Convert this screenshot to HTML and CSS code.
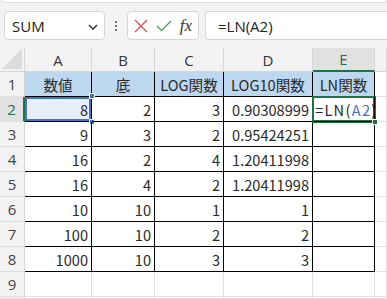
FILE: index.html
```
<!DOCTYPE html>
<html lang="ja">
<head>
<meta charset="utf-8">
<link rel="stylesheet" href="styles.css">
</head>
<body>
<div class="app">
  <div class="ribbon-edge"></div>
  <div class="toolbar">
    <div class="namebox"><span class="name">SUM</span>
      <svg class="chev" width="10" height="6" viewBox="0 0 10 6"><path d="M1 1 L5 5 L9 1" fill="none" stroke="#333" stroke-width="1.5"/></svg>
    </div>
    <div class="vdots"><i></i><i></i><i></i></div>
    <div class="fnbox">
      <svg width="14" height="14" viewBox="0 0 14 14"><path d="M1 1 L13 13 M13 1 L1 13" stroke="#d9534f" stroke-width="1.3" fill="none"/></svg>
      <svg width="16" height="12" viewBox="0 0 16 12"><path d="M1 6 L5.5 10.5 L15 1" stroke="#4ea35a" stroke-width="1.3" fill="none"/></svg>
      <span class="fx">fx</span>
    </div>
    <div class="formula">=LN(A2)</div>
  </div>
  <div class="sheet">
    <div class="corner"><svg width="20" height="21" viewBox="0 0 20 21"><polygon points="20,0 20,21 0,21" fill="#dcdcdc"/></svg></div>
    <div class="ch">A</div><div class="ch">B</div><div class="ch">C</div><div class="ch">D</div><div class="ch sel">E</div><div class="ch"></div>

    <div class="rh">1</div>
    <div class="c t hd">数値</div><div class="c t hd">底</div><div class="c t hd">LOG関数</div><div class="c t hd">LOG10関数</div><div class="c t hd">LN関数</div><div class="c"></div>

    <div class="rh sel">2</div>
    <div class="c t n ref">8<span class="hdl tr"></span><span class="hdl br"></span></div><div class="c t n">2</div><div class="c t n">3</div><div class="c t n">0.90308999</div><div class="c t active">=LN(<span class="refc">A2</span>)<span class="fill"></span></div><div class="c"></div>

    <div class="rh">3</div>
    <div class="c t n">9</div><div class="c t n">3</div><div class="c t n">2</div><div class="c t n">0.95424251</div><div class="c t"></div><div class="c"></div>

    <div class="rh">4</div>
    <div class="c t n">16</div><div class="c t n">2</div><div class="c t n">4</div><div class="c t n">1.20411998</div><div class="c t"></div><div class="c"></div>

    <div class="rh">5</div>
    <div class="c t n">16</div><div class="c t n">4</div><div class="c t n">2</div><div class="c t n">1.20411998</div><div class="c t"></div><div class="c"></div>

    <div class="rh">6</div>
    <div class="c t n">10</div><div class="c t n">10</div><div class="c t n">1</div><div class="c t n">1</div><div class="c t"></div><div class="c"></div>

    <div class="rh">7</div>
    <div class="c t n">100</div><div class="c t n">10</div><div class="c t n">2</div><div class="c t n">2</div><div class="c t"></div><div class="c"></div>

    <div class="rh">8</div>
    <div class="c t n">1000</div><div class="c t n">10</div><div class="c t n">3</div><div class="c t n">3</div><div class="c t"></div><div class="c"></div>

    <div class="rh">9</div>
    <div class="c"></div><div class="c"></div><div class="c"></div><div class="c"></div><div class="c"></div><div class="c"></div>

    <div class="rh"></div>
    <div class="c"></div><div class="c"></div><div class="c"></div><div class="c"></div><div class="c"></div><div class="c"></div>
  </div>
</div>
</body>
</html>
```
FILE: styles.css
```
* { box-sizing: border-box; }
html, body { margin: 0; padding: 0; }
body {
  width: 387px; height: 299px; overflow: hidden;
  background: #fff;
  font-family: "Noto Sans CJK JP", "Noto Sans", sans-serif;
  color: #222;
}
.app { width: 387px; height: 299px; display: flex; flex-direction: column; background: #f3f3f3; }
.ribbon-edge {
  height: 3px; margin-left: 1px; background: #fff;
  border: 1px solid #dedede; border-top: none;
  border-bottom-left-radius: 4px;
}
.toolbar {
  height: 45px; display: flex; align-items: flex-start;
  padding: 8px 0 0 4px;
}
.namebox {
  width: 101px; height: 29px; background: #fff;
  border: 1px solid #d6d6d6; border-radius: 4px;
  display: flex; align-items: center; justify-content: space-between;
  padding: 0 6px 0 7px;
  font-family: "Open Sans", "Noto Sans", sans-serif; font-size: 15px; color: #222;
}
.chev { margin-top: 2px; }
.vdots { width: 22px; height: 29px; display: flex; flex-direction: column; align-items: center; justify-content: center; gap: 2px; }
.vdots i { width: 2px; height: 2px; background: #444; display: block; border-radius: 1px; }
.fnbox {
  width: 72px; height: 29px; background: #fff;
  border: 1px solid #d6d6d6; border-radius: 4px;
  display: flex; align-items: center; justify-content: space-between;
  padding: 0 6px 0 6px;
}
.fx { font-family: "Liberation Serif", "DejaVu Serif", serif; font-style: italic; font-weight: normal; font-size: 17px; color: #333; }
.formula {
  flex: 1; margin-left: 6px; height: 29px; background: #fff;
  border: 1px solid #d6d6d6; border-right: none; border-radius: 4px 0 0 4px;
  display: flex; align-items: center; padding-left: 12px;
  font-family: "Open Sans", "Noto Sans", sans-serif; font-size: 15px; color: #222;
}
.sheet {
  flex: 1; display: grid;
  grid-template-columns: 25px 67px 63px 69px 89px 62px 1fr;
  grid-template-rows: 24px repeat(9, 25px) 1fr;
  background: #fff;
  font-size: 14.6px;
  color: #2a2a2a;
}
.corner { background: #f3f3f3; border-right: 1px solid #d6d6d6; border-bottom: 1px solid #d6d6d6; display: flex; align-items: flex-end; justify-content: flex-end; padding: 0 2px 2px 0; }
.ch {
  background: #f3f3f3; border-right: 1px solid #d6d6d6; border-bottom: 1px solid #d6d6d6;
  display: flex; align-items: center; justify-content: center;
  font-family: "Open Sans", "Noto Sans", sans-serif; font-size: 15px; color: #333;
}
.ch.sel { background: #e1e1e1; color: #1e6e42; border-bottom: 2px solid #1e7145; }
.rh {
  background: #f3f3f3; border-right: 1px solid #d6d6d6; border-bottom: 1px solid #dedede;
  display: flex; align-items: center; justify-content: center;
  font-family: "Open Sans", "Noto Sans", sans-serif; font-size: 15px; color: #444;
}
.rh.sel { background: #e1e1e1; color: #1e6e42; border-right: 2px solid #1e7145; }
.c {
  border-right: 1px solid #e1e1e1; border-bottom: 1px solid #e1e1e1;
  display: flex; align-items: center; padding: 0 3px; white-space: nowrap;
  position: relative;
}
.c.t { border-right-color: #000; border-bottom-color: #000; }
.hd { background: #bdd7ee; justify-content: center; }
.n { justify-content: flex-end; }
.ref { background: #e8eff9; box-shadow: inset 0 0 0 2px #4472c4; }
.hdl { position: absolute; width: 6px; height: 6px; background: #4472c4; border: 1px solid #fff; }
.hdl.tr { right: -4px; top: -4px; }
.hdl.br { right: -4px; bottom: -4px; }
.active { box-shadow: 0 0 0 1px #1e7145, inset 0 0 0 1px #1e7145; padding-left: 2px; z-index: 2; letter-spacing: 1.3px; }
.refc { color: #4472c4; }
.fill { position: absolute; width: 6px; height: 6px; background: #1e7145; border: 1px solid #fff; right: -4px; bottom: -4px; }
```
